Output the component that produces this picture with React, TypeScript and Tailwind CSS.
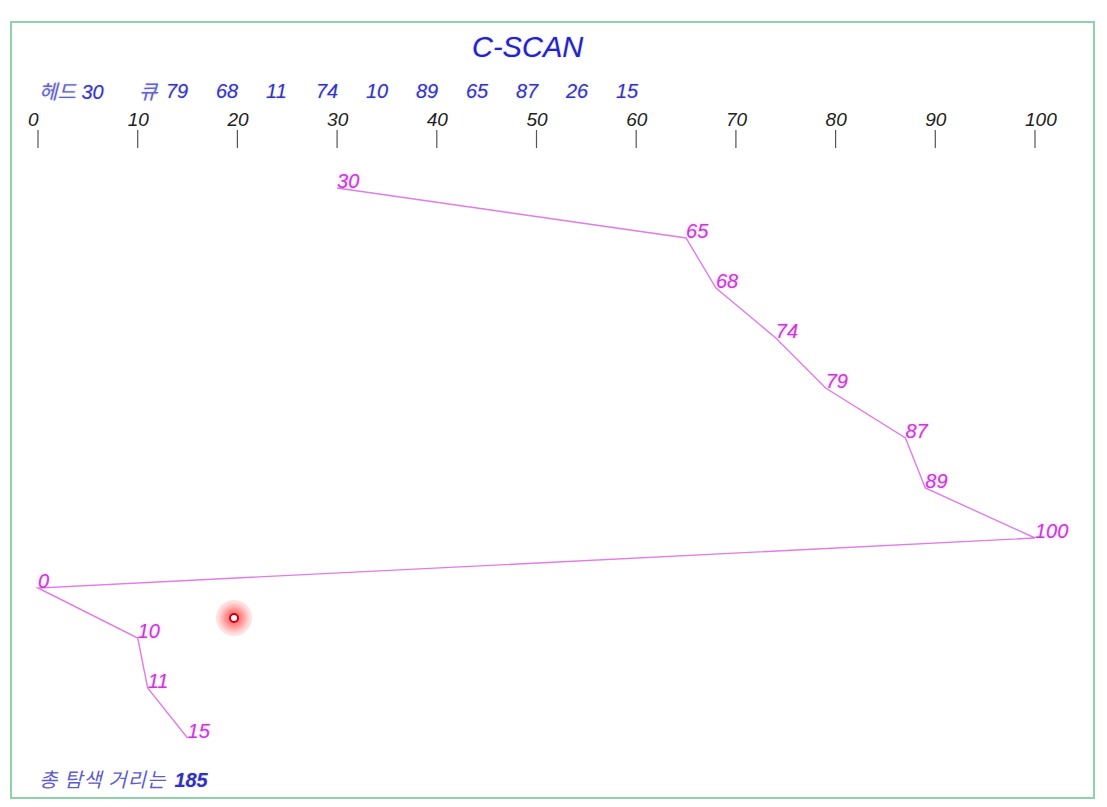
import React from "react";

const OX = 12;
const OY = 23;
const sx = (v: number) => 38 + v * 9.97 - OX;
const seq = [30, 65, 68, 74, 79, 87, 89, 100, 0, 10, 11, 15];
const pts = seq.map((v, i) => ({ v, x: sx(v), y: 188 + 50 * i - OY }));
const ticks = [0, 10, 20, 30, 40, 50, 60, 70, 80, 90, 100];
const queue = [68, 11, 74, 10, 89, 65, 87, 26, 15];

export default function App() {
  return (
    <div
      className="w-[1107px] h-[807px] bg-white pt-[21px] pl-[10px]"
      style={{ fontFamily: '"Liberation Sans", Arial, "Noto Sans CJK KR", sans-serif' }}
    >
      <div className="relative w-[1085px] h-[778px] border-2 border-[#8ed2a9] flex flex-col">
        <svg className="absolute left-0 top-0" width="1081" height="774">
          {ticks.map((t) => (
            <line key={t} x1={sx(t)} x2={sx(t)} y1={130 - OY} y2={148 - OY} stroke="#555" strokeWidth="1.2" />
          ))}
          <polyline
            points={pts.map((p) => `${p.x},${p.y}`).join(" ")}
            fill="none"
            stroke="#e27ae9"
            strokeWidth="1.4"
          />
        </svg>

        <div className="mt-[10px] ml-[460px] text-[29px] leading-[29px] italic text-[#2424c4] [text-shadow:0_0_2px_rgba(80,80,230,0.35)]">
          C-SCAN
        </div>

        <div className="mt-[19px] flex text-[20px] leading-[20px] italic text-[#3434bf] [text-shadow:0_0_2px_rgba(90,90,220,0.35)]">
          <span className="w-[127px] pl-[27px] whitespace-nowrap">
            <span className="text-[#6262cf]" style={{ fontFamily: '"Noto Sans CJK KR", sans-serif', fontWeight: 400 }}>
              헤드
            </span>{" "}
            30
          </span>
          <span className="w-[27px] text-[#6262cf]" style={{ fontFamily: '"Noto Sans CJK KR", sans-serif' }}>
            큐
          </span>
          <span className="w-[50px]">79</span>
          {queue.map((q, i) => (
            <span key={i} className="w-[50px]">
              {q}
            </span>
          ))}
        </div>

        {ticks.map((t) => (
          <span
            key={t}
            className="absolute text-[19px] leading-[19px] italic text-[#222]"
            style={{ left: sx(t) - 10, top: 113 - OY - 3 }}
          >
            {t}
          </span>
        ))}

        {pts.map((p, i) => (
          <span
            key={i}
            className="absolute text-[20px] leading-[20px] italic text-[#c73ad6] [text-shadow:0_0_3px_rgba(235,120,245,0.55)]"
            style={{ left: p.x, top: p.y - 17 }}
          >
            {p.v}
          </span>
        ))}

        <div
          className="absolute w-[36px] h-[36px] rounded-full flex items-center justify-center"
          style={{
            left: 234 - OX - 18,
            top: 618 - OY - 18,
            background:
              "radial-gradient(circle, rgba(255,60,60,0.9) 0%, rgba(255,90,90,0.7) 30%, rgba(255,150,150,0.35) 60%, rgba(255,200,200,0) 100%)",
          }}
        >
          <div className="w-[10px] h-[10px] rounded-full border-[2.5px] border-[#c8000e] bg-white" />
        </div>

        <div className="mt-auto mb-[7px] pl-[27px] flex items-baseline italic">
          <span
            className="text-[20px] leading-[20px] tracking-[1px] text-[#5c5ccd]"
            style={{ fontFamily: '"Noto Sans CJK KR", sans-serif' }}
          >
            총 탐색 거리는
          </span>
          <span className="ml-[8px] text-[20px] leading-[20px] font-bold text-[#3232b8] [text-shadow:0_0_2px_rgba(90,90,220,0.3)]">
            185
          </span>
        </div>
      </div>
    </div>
  );
}
